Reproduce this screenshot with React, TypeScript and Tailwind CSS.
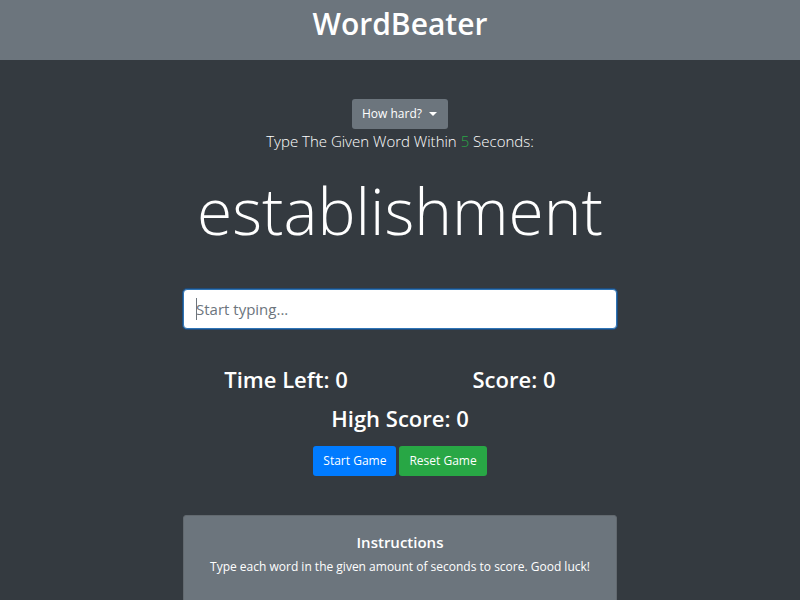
import { useState } from "react";

const LEVELS = [
  { name: "Easy", seconds: 5 },
  { name: "Medium", seconds: 3 },
  { name: "Hard", seconds: 2 },
];

const WORDS = ["establishment", "generate", "hero", "javascript", "space", "symptom"];

function Stat({ label, value }: { label: string; value: number }) {
  return (
    <h3 className="text-center text-[22px] leading-7 font-semibold">
      {label}: {value}
    </h3>
  );
}

export default function App() {
  const [level, setLevel] = useState("");
  const [word, setWord] = useState(0);
  const [typed, setTyped] = useState("");
  const [score, setScore] = useState(0);
  const [highScore, setHighScore] = useState(0);
  const [timeLeft, setTimeLeft] = useState(0);

  const seconds = LEVELS.find((l) => l.name === level)?.seconds ?? 5;

  function handleType(value: string) {
    if (value === WORDS[word]) {
      setScore(score + 1);
      setHighScore(Math.max(highScore, score + 1));
      setWord((word + 1) % WORDS.length);
      setTyped("");
    } else {
      setTyped(value);
    }
  }

  function start() {
    setTyped("");
    setScore(0);
    setTimeLeft(seconds);
  }

  function reset() {
    setTyped("");
    setScore(0);
    setHighScore(0);
    setTimeLeft(0);
  }

  return (
    <div className="min-h-screen bg-[#343a40] font-['Open_Sans','Noto_Sans',sans-serif] text-white">
      <header className="bg-[#6c757d] pt-1 pb-4 text-center">
        <h1 className="text-[30px] leading-10 font-semibold">WordBeater</h1>
      </header>

      <main className="mx-auto flex w-full max-w-[434px] flex-col items-center pt-[39px] pb-12">
        <div className="relative h-[30px]">
          <select
            aria-label="How hard?"
            value={level}
            onChange={(e) => setLevel(e.target.value)}
            className="h-full w-24 appearance-none rounded-[3px] bg-[#6c757d] pr-4 pl-[10px] text-[12px] text-white"
          >
            <option value="" hidden>
              How hard?
            </option>
            {LEVELS.map((l) => (
              <option key={l.name}>{l.name}</option>
            ))}
          </select>
          <span className="pointer-events-none absolute top-[13px] right-[11px] border-x-4 border-t-4 border-x-transparent border-t-white" />
        </div>

        <p className="text-[15px] leading-6 font-light">
          Type The Given Word Within <span className="text-[#28a745]">{seconds}</span> Seconds:
        </p>

        <h2 className="mt-4 text-[64px] leading-[84px] font-light">{WORDS[word]}</h2>

        <div className="relative mt-9 w-full">
          <input
            type="text"
            aria-label="Type the word"
            placeholder="Start typing..."
            autoFocus
            value={typed}
            onChange={(e) => handleType(e.target.value)}
            className="block h-10 w-full rounded-[4px] border border-[#2f74b5] bg-white px-3 text-[15px] text-[#495057] ring-1 ring-[#1f4b7a] outline-none placeholder:text-[#6c757d] placeholder-shown:caret-transparent"
          />
          {typed === "" && (
            <span className="pointer-events-none absolute top-[9px] left-[13px] h-[22px] w-px bg-[#6c757d]" />
          )}
        </div>

        <div className="mt-9 grid w-[calc(100%+22px)] grid-cols-2">
          <Stat label="Time Left" value={timeLeft} />
          <Stat label="Score" value={score} />
        </div>
        <div className="mt-[11px]">
          <Stat label="High Score" value={highScore} />
        </div>

        <div className="mt-[14px] flex gap-[3px] text-[12px]">
          <button type="button" onClick={start} className="h-[30px] rounded-[3px] bg-[#007bff] px-[10px]">
            Start Game
          </button>
          <button type="button" onClick={reset} className="h-[30px] rounded-[3px] bg-[#28a745] px-[10px]">
            Reset Game
          </button>
        </div>

        <section className="mt-[39px] w-full rounded-[3px] border border-[#62696f] bg-[#6c757d] px-4 pt-4 pb-8 text-center">
          <h5 className="text-[15px] leading-5 font-semibold">Instructions</h5>
          <p className="mt-[5px] text-[12px] leading-5">
            Type each word in the given amount of seconds to score. Good luck!
          </p>
        </section>
      </main>
    </div>
  );
}
